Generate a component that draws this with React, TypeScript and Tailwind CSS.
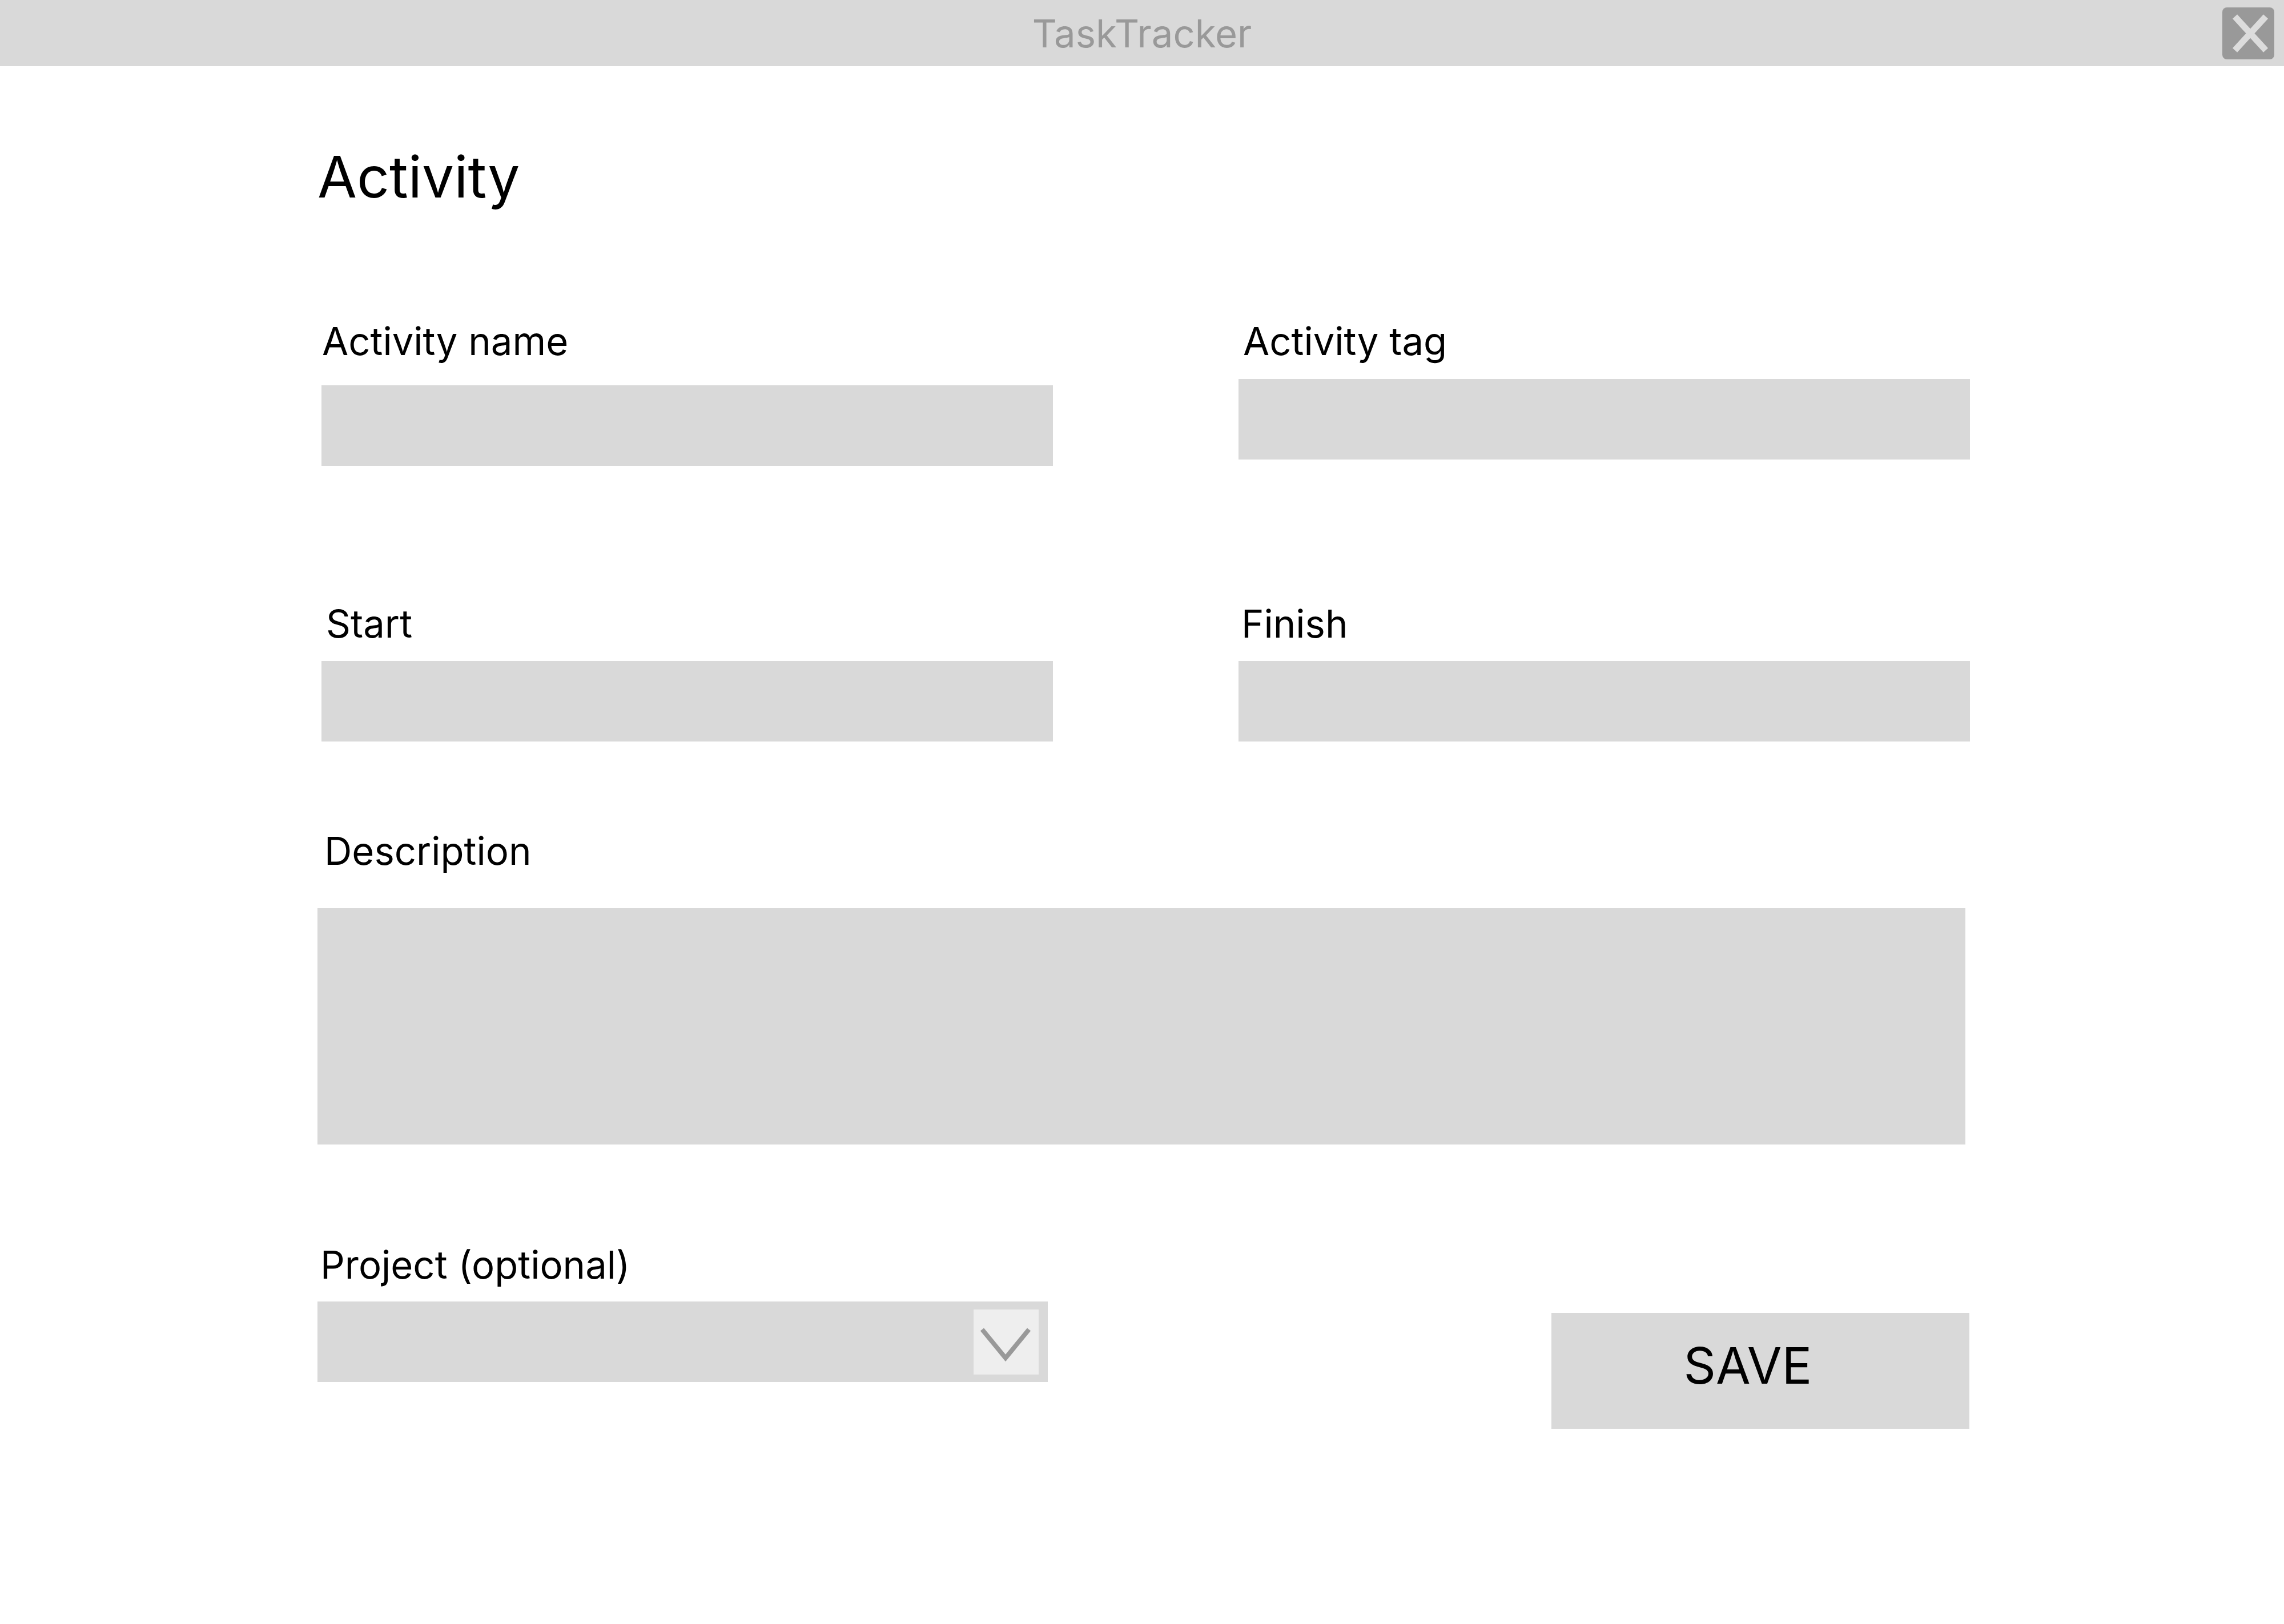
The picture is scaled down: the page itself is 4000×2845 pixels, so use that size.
import { ReactNode } from "react";

const Field = ({
  label,
  labelOffset,
  inputGap,
}: { label: string; labelOffset: string; inputGap: string }) => {
  return (
    <div className="flex flex-col">
      <span className={`text-[67px] leading-none text-black ${labelOffset}`}>{label}</span>
      <div className={`h-[141px] w-[1281px] bg-[#d9d9d9] ${inputGap}`} />
    </div>
  );
};

const Row = ({ children, className }: { children: ReactNode; className: string }) => (
  <div className={`grid grid-cols-[1281px_1281px] gap-x-[325px] items-start ${className}`}>{children}</div>
);

export default function App() {
  return (
    <div className="h-[2845px] w-full bg-white font-['Inter','Roboto',sans-serif]">
      <header className="grid h-[116px] grid-cols-[1fr_auto_1fr] items-center bg-[#d9d9d9]">
        <div />
        <span className="text-[67px] leading-none text-[#999999]">TaskTracker</span>
        <div className="flex justify-end pr-[17px]">
          <button className="flex h-[91px] w-[91px] items-center justify-center rounded-[8px] bg-[#999999]">
            <svg width="91" height="91" viewBox="0 0 91 91">
              <path d="M22 16 L76 75 M76 16 L22 75" stroke="#dcdcdc" strokeWidth="11" fill="none" />
            </svg>
          </button>
        </div>
      </header>

      <main className="flex flex-col pl-[556px] pt-[144px]">
        <h1 className="text-[100px] leading-none text-black">Activity</h1>

        {/* name / tag */}
        <Row className="ml-[7px] mt-[204px]">
          <Field label="Activity name" labelOffset="ml-[1px]" inputGap="mt-[44px]" />
          <Field label="Activity tag" labelOffset="ml-[8px]" inputGap="mt-[33px]" />
        </Row>

        {/* start / finish */}
        <Row className="ml-[7px] mt-[243px]">
          <Field label="Start" labelOffset="ml-[8px]" inputGap="mt-[32px]" />
          <Field label="Finish" labelOffset="ml-[5px]" inputGap="mt-[32px]" />
        </Row>

        <span className="ml-[12px] mt-[158px] text-[67px] leading-none text-black">Description</span>
        <div className="mt-[67px] h-[414px] w-[2886px] bg-[#d9d9d9]" />

        <div className="mt-[177px] flex items-start">
          <div className="flex w-[1279px] flex-col">
            <span className="ml-[5px] text-[67px] leading-none text-black">Project (optional)</span>
            <div className="mt-[31px] flex h-[141px] w-[1279px] items-center justify-end bg-[#d9d9d9] pr-[16px]">
              <div className="h-[114px] w-[114px] bg-[#eeeeee]">
                <svg width="114" height="114" viewBox="0 0 114 114">
                  <path d="M15 35 L56 85 L97 35" stroke="#999999" strokeWidth="8" fill="none" />
                </svg>
              </div>
            </div>
          </div>
          <button className="ml-[882px] mt-[118px] flex h-[203px] w-[732px] items-start justify-center bg-[#d9d9d9] pr-[44px] pt-[48px]">
            <span className="text-[88px] leading-none text-black">SAVE</span>
          </button>
        </div>
      </main>
    </div>
  );
}
